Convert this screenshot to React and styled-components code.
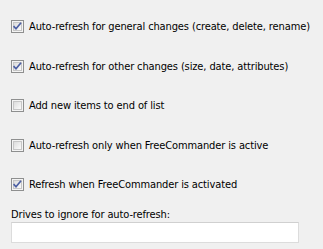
import React from "react";
import styled, { createGlobalStyle } from "styled-components";

const Global = createGlobalStyle`
  html, body { margin: 0; padding: 0; background: #f0f0f0; }
  body { font-family: "DejaVu Sans Condensed", "Liberation Sans", sans-serif; }
`;

const Page = styled.div`
  width: 323px;
  height: 249px;
  box-sizing: border-box;
  padding: 20px 0 0 11px;
  background: #f0f0f0;
  display: flex;
  flex-direction: column;
`;

const Options = styled.div`
  display: flex;
  flex-direction: column;
  gap: 26.5px;
`;

const Row = styled.label`
  display: flex;
  align-items: center;
  gap: 5px;
  height: 13px;
  font-size: 11px;
  letter-spacing: -0.12px;
  color: #000;
  white-space: nowrap;
`;

const Box = styled.span`
  width: 13px;
  height: 13px;
  box-sizing: border-box;
  border: 1px solid #8e8f8f;
  background: #f4f4f4;
  display: flex;
  align-items: center;
  justify-content: center;
  flex: none;
`;

const Inner = styled.span`
  width: 9px;
  height: 9px;
  box-sizing: border-box;
  border: 1px solid #c6c6c6;
  background: linear-gradient(135deg, #dcdcdc 0%, #f2f2f2 70%, #fbfbfb 100%);
  display: flex;
  align-items: center;
  justify-content: center;
  overflow: visible;
`;

const Label = styled.div`
  margin-top: 17px;
  font-size: 11px;
  letter-spacing: -0.12px;
  line-height: 13px;
  color: #000;
`;

const Input = styled.div`
  margin-top: 1px;
  width: 288px;
  height: 21px;
  box-sizing: border-box;
  background: #fff;
  border: 1px solid #dcdcdc;
  border-top-color: #d0d0d0;
`;

const Check = () => (
  <svg width="9" height="9" viewBox="0 0 9 9" style={{ overflow: "visible" }}>
    <path d="M0.6 4.2 L3 6.8 L8 0.8" fill="none" stroke="#4c5fa3" strokeWidth="1.7" />
  </svg>
);

const CheckBox = ({ checked }) => (
  <Box>
    <Inner>{checked && <Check />}</Inner>
  </Box>
);

const items = [
  { text: "Auto-refresh for general changes (create, delete, rename)", checked: true },
  { text: "Auto-refresh for other changes (size, date, attributes)", checked: true },
  { text: "Add new items to end of list", checked: false },
  { text: "Auto-refresh only when FreeCommander is active", checked: false },
  { text: "Refresh when FreeCommander is activated", checked: true },
];

export default function App() {
  return (
    <Page>
      <Global />
      <Options>
        {items.map((it) => (
          <Row key={it.text}>
            <CheckBox checked={it.checked} />
            <span>{it.text}</span>
          </Row>
        ))}
      </Options>
      <Label>Drives to ignore for auto-refresh:</Label>
      <Input />
    </Page>
  );
}
